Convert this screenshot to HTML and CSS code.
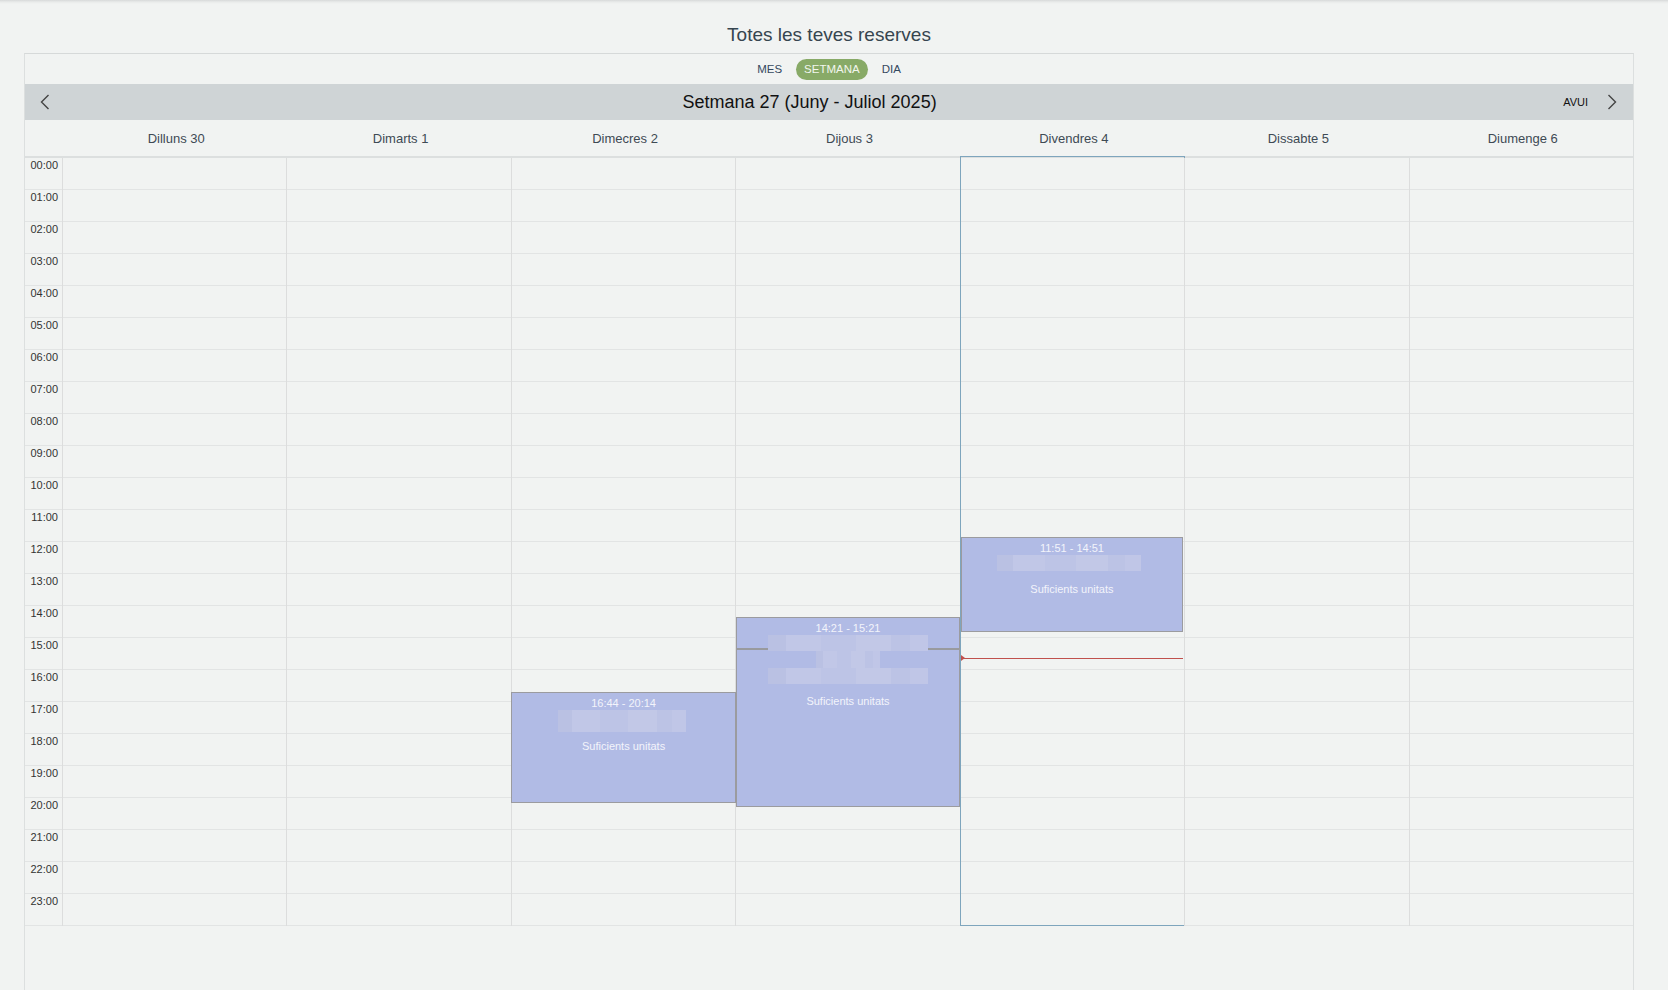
FILE: index.html
```html
<!DOCTYPE html>
<html lang="ca">
<head>
<meta charset="utf-8">
<title>Totes les teves reserves</title>
<link rel="stylesheet" href="styles.css">
</head>
<body>
<div class="page">
  <h1 class="title">Totes les teves reserves</h1>
  <div class="cal">
    <div class="views">
      <span class="view">MES</span>
      <span class="view active">SETMANA</span>
      <span class="view">DIA</span>
    </div>
    <div class="bar">
      <span class="nav prev"><svg width="10" height="16" viewBox="0 0 10 16"><polyline points="8.5,1 1.5,8 8.5,15" fill="none" stroke="#444" stroke-width="1.4"/></svg></span>
      <span class="bar-title">Setmana 27 (Juny - Juliol 2025)</span>
      <span class="today">AVUI</span>
      <span class="nav next"><svg width="10" height="16" viewBox="0 0 10 16"><polyline points="1.5,1 8.5,8 1.5,15" fill="none" stroke="#444" stroke-width="1.4"/></svg></span>
    </div>
    <div class="days">
      <div></div>
      <div class="dayname">Dilluns 30</div>
      <div class="dayname">Dimarts 1</div>
      <div class="dayname">Dimecres 2</div>
      <div class="dayname">Dijous 3</div>
      <div class="dayname">Divendres 4</div>
      <div class="dayname">Dissabte 5</div>
      <div class="dayname">Diumenge 6</div>
    </div>
    <div class="grid">
      <div class="times">
        <div class="hour">00:00</div><div class="hour">01:00</div><div class="hour">02:00</div><div class="hour">03:00</div>
        <div class="hour">04:00</div><div class="hour">05:00</div><div class="hour">06:00</div><div class="hour">07:00</div>
        <div class="hour">08:00</div><div class="hour">09:00</div><div class="hour">10:00</div><div class="hour">11:00</div>
        <div class="hour">12:00</div><div class="hour">13:00</div><div class="hour">14:00</div><div class="hour">15:00</div>
        <div class="hour">16:00</div><div class="hour">17:00</div><div class="hour">18:00</div><div class="hour">19:00</div>
        <div class="hour">20:00</div><div class="hour">21:00</div><div class="hour">22:00</div><div class="hour">23:00</div>
      </div>
      <div class="day"></div>
      <div class="day"></div>
      <div class="day">
        <div class="event" style="top:534px;height:111px;">
          <div class="ev-time">16:44 - 20:14</div>
          <div class="blur b-wide2"></div>
          <div class="ev-text t2">Suficients unitats</div>
        </div>
      </div>
      <div class="day">
        <div class="event ev-d" style="top:459px;height:190px;">
          <div class="ev-split"></div>
          <div class="ev-time">14:21 - 15:21</div>
          <div class="blur b-row"></div>
          <div class="blur b-short"></div>
          <div class="blur b-row"></div>
          <div class="ev-text t3">Suficients unitats</div>
        </div>
      </div>
      <div class="day today-col">
        <div class="today-frame"></div>
        <div class="event ev-in" style="top:379px;height:95px;">
          <div class="ev-time">11:51 - 14:51</div>
          <div class="blur b-mid"></div>
          <div class="ev-text t1">Suficients unitats</div>
        </div>
        <div class="now" style="top:500px;"></div>
      </div>
      <div class="day"></div>
      <div class="day"></div>
    </div>
  </div>
</div>
</body>
</html>
```
FILE: styles.css
```css
html, body {
  margin: 0;
  padding: 0;
}
body {
  background: #f1f3f2;
  font-family: "Liberation Sans", Arial, sans-serif;
  color: #333;
  height: 990px;
  overflow: hidden;
}
.page {
  position: relative;
  height: 990px;
  padding-left: 24px;
  background: linear-gradient(#d7d9d9 0, #e9ebea 2px, #f1f3f2 4px);
}
.title {
  margin: 0;
  width: 1610px;
  padding: 23px 0 6px;
  height: 24px;
  line-height: 24px;
  font-size: 19px;
  font-weight: normal;
  text-align: center;
  color: #36454f;
}
.cal {
  width: 1608px;
  height: 937px;
  border-left: 1px solid #dcdfdf;
  border-right: 1px solid #dcdfdf;
  border-top: 1px solid #d6d9d9;
}
.views {
  height: 30px;
  display: flex;
  justify-content: center;
  align-items: center;
  gap: 6px;
}
.view {
  padding: 0 8px;
  height: 21px;
  line-height: 21px;
  font-size: 11.5px;
  color: #34495e;
  border-radius: 11px;
}
.view.active {
  background: #88aa67;
  color: #f2f6ee;
}
.bar {
  height: 36px;
  background: #cfd4d6;
  display: flex;
  align-items: center;
  padding: 0 14px 0 15px;
}
.nav {
  display: flex;
  width: 12px;
  height: 16px;
  align-items: center;
}
.bar-title {
  flex: 1;
  text-align: center;
  font-size: 18px;
  color: #111;
  padding-left: 4px;
}
.today {
  font-size: 11px;
  color: #111;
  margin-right: 19px;
}
.days {
  display: grid;
  grid-template-columns: 37px repeat(7, 1fr);
  height: 36px;
  border-bottom: 2px solid #dcdfdf;
}
.dayname {
  text-align: center;
  line-height: 37px;
  font-size: 13px;
  color: #3e4a54;
  padding-left: 4px;
}
.grid {
  display: grid;
  grid-template-columns: 37px repeat(7, 1fr);
  height: 768px;
}
.times {
  display: flex;
  flex-direction: column;
}
.hour {
  border-bottom: 1px solid #e2e4e4;
  font-size: 11px;
  line-height: 14px;
  padding-top: 0;
  box-sizing: border-box;
  height: 32px;
  text-align: right;
  padding-right: 4px;
  color: #333;
}
.day {
  position: relative;
  border-left: 1px solid #dcdddd;
  background: repeating-linear-gradient(to bottom, transparent 0, transparent 31px, #e2e4e4 31px, #e2e4e4 32px);
}
.today-frame {
  position: absolute;
  top: -2px;
  left: -1px;
  right: -1px;
  bottom: 0;
  border: 1px solid #7ea5bd;
}
.event {
  position: absolute;
  left: -1px;
  right: -1px;
  box-sizing: border-box;
  background: #b1bbe5;
  border: 1px solid #9b9b9f;
  text-align: center;
  color: #f3f4fb;
  font-size: 11px;
  padding-top: 3px;
  z-index: 2;
}
.event.ev-d {
  left: 0;
  right: 0;
}
.event.ev-in {
  left: 0;
  right: 1px;
}
.ev-time {
  line-height: 14px;
  position: relative;
}
.ev-split {
  position: absolute;
  left: 0;
  right: 0;
  top: 30px;
  height: 2px;
  background: #999a9e;
}
.blur {
  position: relative;
  margin: 0 auto;
  height: 16px;
  background: linear-gradient(90deg, #bac1e3 0 11%, #c1c7e7 11% 33%, #bdc4e6 33% 55%, #c2c8e7 55% 77%, #bcc3e5 77% 89%, #c0c6e7 89% 100%);
}
.b-mid { width: 144px; position: relative; left: -3px; }
.b-wide2 { width: 128px; height: 22px; left: -2px; }
.b-row { width: 160px; }
.b-short { width: 64px; height: 17px; }
.ev-text {
  line-height: 14px;
}
.t1 { margin-top: 11px; }
.t2 { margin-top: 7px; }
.t3 { margin-top: 10px; }
.now {
  position: absolute;
  left: 0;
  right: 1px;
  height: 1px;
  background: #c0504d;
  z-index: 3;
}
.now::before {
  content: "";
  position: absolute;
  left: 0;
  top: -3px;
  border-left: 4px solid #c0504d;
  border-top: 3.5px solid transparent;
  border-bottom: 3.5px solid transparent;
}
```
